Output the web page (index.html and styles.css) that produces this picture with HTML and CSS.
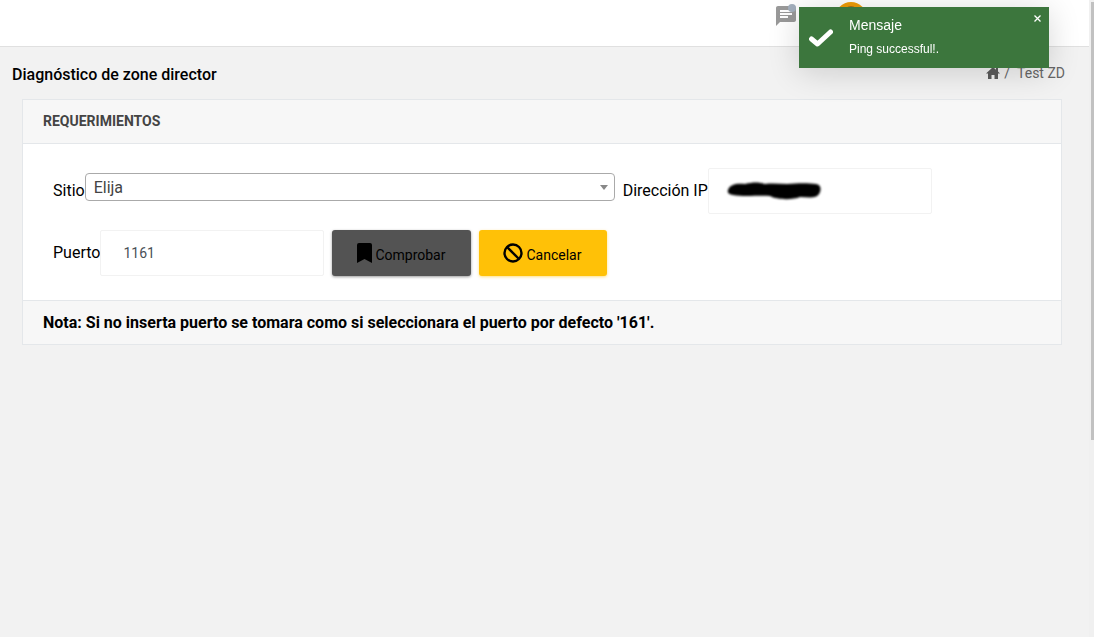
FILE: index.html
```html
<!DOCTYPE html>
<html lang="es">
<head>
  <meta charset="utf-8">
  <meta name="viewport" content="width=device-width, initial-scale=1">
  <title>Diagnóstico de zone director</title>
  <link rel="stylesheet" href="styles.css">
</head>
<body>
  <div class="page">
    <header class="topbar">
      <button class="icon-button" type="button" aria-label="Mensajes">
        <svg width="24" height="26" viewBox="0 0 24 26" aria-hidden="true">
          <path fill="#999" d="M20 4H4c-1.100 0-2 .9-2 2v18l4-4h14c1.100 0 2-.9 2-2V6c0-1.100-.9-2-2-2z"/>
          <path fill="#fff" d="M6 8h12v2H6zM6 11h12v2H6zM6 14h8v2H6z"/>
          <circle cx="18" cy="6" r="4" fill="#a3afbd"/>
        </svg>
      </button>
      <button class="icon-button" type="button" aria-label="Usuario">
        <svg width="32" height="32" viewBox="0 0 32 32" aria-hidden="true">
          <circle cx="16" cy="16" r="16" fill="#ef9c06"/>
          <circle cx="16" cy="11" r="7" fill="#a86b16"/>
          <path d="M5 26c2-10 20-10 22 0-6 6-16 6-22 0z" fill="#a86b16"/>
        </svg>
      </button>
    </header>

    <main>
      <div class="heading">
        <h1 class="heading-title">Diagnóstico de zone director</h1>
        <nav class="breadcrumb" aria-label="Ruta">
          <a class="breadcrumb-home" href="#" aria-label="Inicio">
            <svg width="14" height="12" viewBox="0 0 14 12" aria-hidden="true">
              <path fill="#5c5c5c" d="M7 0 0 6.500h2V12h3.500V8h3v4H12V6.500h2L12 4.600V1h-2v1.800z"/>
            </svg>
          </a>
          <span>/</span>
          <a class="breadcrumb-link" href="#">Test ZD</a>
        </nav>
      </div>

      <form class="card">
        <h2 class="card-header">REQUERIMIENTOS</h2>
        <div class="card-body">
          <div class="form-row">
            <div class="field">
              <label for="site">Sitio</label>
              <div class="select-wrap">
                <select class="select" id="site"><option>Elija</option></select>
              </div>
            </div>
            <div class="field">
              <label for="ip">Dirección IP</label>
              <div class="input-wrap">
                <input class="input" id="ip" type="text">
                <svg class="mask" width="100" height="22" viewBox="0 0 100 22" aria-hidden="true">
                  <defs><filter id="soft" x="-10%" y="-30%" width="120%" height="160%"><feGaussianBlur stdDeviation="1"/></filter></defs>
                  <path filter="url(#soft)" d="M3 10C5 4 12 3 20 4C28 2 34 2 40 4C48 3 55 4 62 4C73 3 84 3 91 4C97 5 96 11 94 14C91 19 83 17 75 17C68 20 52 20 45 16C35 15 19 17 8 15C4 14 2 13 3 10Z"/>
                </svg>
              </div>
            </div>
          </div>
          <div class="form-row">
            <div class="field">
              <label for="port">Puerto</label>
              <input class="input" id="port" type="text" value="1161">
            </div>
            <button class="button button-dark" type="button">
              <svg width="16" height="20" viewBox="0 0 16 20" aria-hidden="true">
                <path d="M3 0h11q2 0 2 2v18l-7.500-4L1 20V2q0-2 2-2z"/>
              </svg>
              <span class="button-text">Comprobar</span>
            </button>
            <button class="button button-amber" type="button">
              <svg width="20" height="20" viewBox="0 0 20 20" fill="none" stroke="#000" stroke-width="2.400" aria-hidden="true">
                <circle cx="10" cy="10" r="8.500"/>
                <path d="m4 4 12 12"/>
              </svg>
              <span class="button-text">Cancelar</span>
            </button>
          </div>
        </div>
        <p class="card-footer">Nota: Si no inserta puerto se tomara como si seleccionara el puerto por defecto '161'.</p>
      </form>
    </main>
  </div>

  <div class="toast" role="status">
    <svg class="toast-icon" width="24" height="18" viewBox="0 0 24 18" fill="none" stroke="#fff" stroke-width="5" stroke-linecap="round" stroke-linejoin="round" aria-hidden="true">
      <path d="m2.500 10 6 5L21.500 3"/>
    </svg>
    <div class="toast-content">
      <strong class="toast-title">Mensaje</strong>
      <span class="toast-text">Ping successful!.</span>
    </div>
    <button class="toast-close" type="button" aria-label="Cerrar">
      <svg width="7" height="7" viewBox="0 0 7 7" stroke="#fff" stroke-width="1.300" aria-hidden="true"><path d="m.5.5 6 6m0-6-6 6"/></svg>
    </button>
  </div>
  <div class="scrollbar" aria-hidden="true"><div class="scrollbar-thumb"></div></div>
</body>
</html>
```
FILE: styles.css
```css
* {
  box-sizing: border-box;
}

body {
  margin: 0;
  min-height: 100vh;
  background: #f2f2f2;
  color: #000;
  font: 16px/24px Roboto, "Liberation Sans", sans-serif;
}

button,
input,
select {
  font-family: inherit;
}

.page {
  margin-right: 5px;
}

.topbar {
  display: flex;
  justify-content: flex-end;
  align-items: flex-start;
  gap: 37px;
  height: 47px;
  padding: 2px 222px 0 0;
  background: #fff;
  border-bottom: 1px solid #e0e0e0;
}

.icon-button {
  display: flex;
  padding: 0;
  border: 0;
  background: none;
}

.heading {
  display: flex;
  justify-content: space-between;
  align-items: flex-start;
  padding: 16px 24px 12px 12px;
}

.heading-title {
  margin: 0;
  font-size: 16px;
  font-weight: 500;
}

.breadcrumb {
  display: flex;
  align-items: center;
  gap: 4px;
  color: #666;
  font-size: 14px;
  line-height: 20px;
}

.breadcrumb-home {
  display: flex;
}

.breadcrumb-link {
  padding-left: 3px;
  color: inherit;
  text-decoration: none;
}

.card {
  margin: 0 27px 0 22px;
  background: #fff;
  border: 1px solid #e4e7ea;
}

.card-header,
.card-footer {
  margin: 0;
  padding: 10px 20px;
  background: #f7f7f7;
  font-weight: 700;
  line-height: 23px;
}

.card-header {
  border-bottom: 1px solid #e4e7ea;
  color: #444;
  font-size: 14px;
}

.card-footer {
  border-top: 1px solid #e4e7ea;
  font-size: 16px;
}

.card-body {
  display: flex;
  flex-direction: column;
  gap: 16px;
  padding: 24px 30px;
}

.form-row {
  display: flex;
  flex-wrap: wrap;
  gap: 8px;
}

.field {
  display: flex;
  align-items: center;
  min-height: 46px;
}

.select-wrap {
  position: relative;
  width: 530px;
  max-width: 100%;
  padding-bottom: 8px;
}

.select-wrap::after {
  content: "";
  position: absolute;
  top: 12px;
  right: 7px;
  border: 4px solid transparent;
  border-top: 5px solid #888;
  border-bottom: 0;
  pointer-events: none;
}

.select {
  display: block;
  width: 100%;
  height: 28px;
  padding: 0 8px;
  appearance: none;
  background: #fff;
  border: 1px solid #aaa;
  border-radius: 4px;
  color: #444;
  font-size: 16px;
}

.input-wrap {
  position: relative;
}

.input {
  display: block;
  width: 224px;
  height: 46px;
  padding: 0 22px;
  background: #fff;
  border: 1px solid #f2f2f2;
  border-radius: 2px;
  color: #495057;
  font-size: 14px;
}

.mask {
  position: absolute;
  top: 12px;
  left: 17px;
  pointer-events: none;
}

.button {
  display: flex;
  align-items: center;
  gap: 3px;
  height: 46px;
  padding: 0 26px 0 24px;
  border: 0;
  border-radius: 3px;
  color: #000;
  font-size: 14px;
  line-height: 20px;
}

.button-text {
  padding-top: 4px;
}

.button-dark {
  background: #535353;
  box-shadow: 0 1px 3px rgba(0, 0, 0, 0.4);
}

.button-amber {
  background: #ffc107;
  box-shadow: 0 1px 3px rgba(255, 193, 7, 0.5);
}

.toast {
  position: fixed;
  top: 7px;
  right: 45px;
  display: flex;
  align-items: center;
  gap: 16px;
  width: 250px;
  min-height: 61px;
  padding: 5px 10px;
  background: #3c763d;
  box-shadow: 0 4px 32px rgba(0, 0, 0, 0.16);
  color: #fff;
  font-family: "Liberation Sans", Arial, sans-serif;
}

.toast-content {
  display: flex;
  flex-direction: column;
  padding-bottom: 2px;
}

.toast-title {
  font-size: 14px;
  font-weight: 400;
}

.toast-text {
  font-size: 12px;
}

.toast-close {
  position: absolute;
  top: 8px;
  right: 8px;
  display: flex;
  padding: 0;
  border: 0;
  background: none;
}

.scrollbar {
  position: fixed;
  top: 0;
  right: 0;
  bottom: 0;
  width: 5px;
  padding: 2px 0 0 2px;
  background: #f0f0f0;
}

.scrollbar-thumb {
  height: 69%;
  background: #c1c1c1;
}
```
